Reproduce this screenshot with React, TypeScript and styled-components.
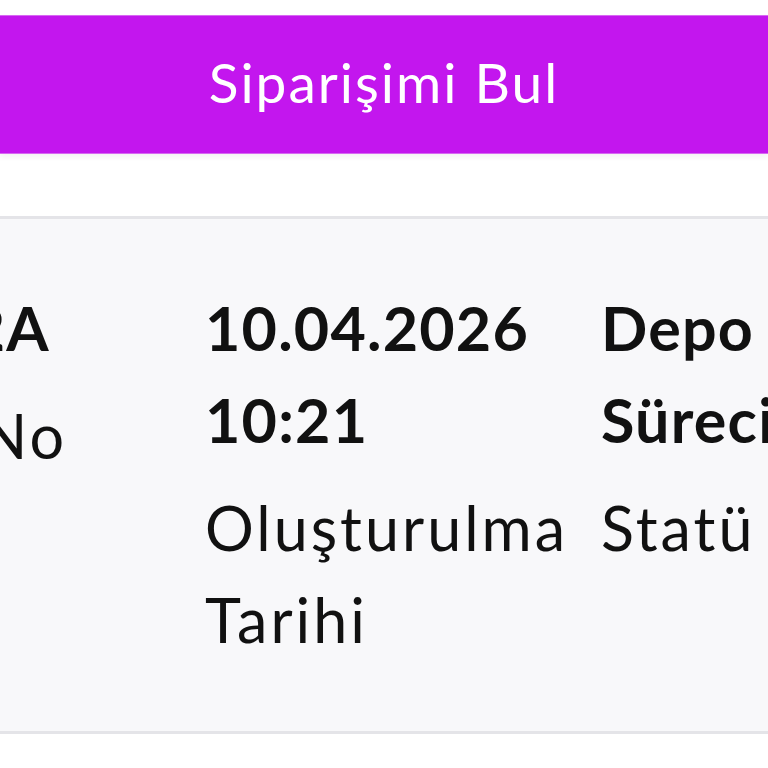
import React from "react";
import styled, { createGlobalStyle } from "styled-components";

const Global = createGlobalStyle`
  html, body { margin: 0; padding: 0; background: #ffffff; }
  body { font-family: Lato, "Noto Sans", sans-serif; color: #111111; }
  * { box-sizing: border-box; }
`;

const Page = styled.div`
  width: 768px;
  height: 768px;
  overflow: hidden;
  padding-top: 15px;
  background: #ffffff;
`;

const FindButton = styled.button`
  display: flex;
  align-items: center;
  justify-content: center;
  width: 100%;
  height: 139px;
  border: none;
  border-top: 1px solid #d768f2;
  border-bottom: 1px solid #d768f2;
  background: #c316ee;
  color: #ffffff;
  font-family: Lato, "Noto Sans", sans-serif;
  font-size: 55px;
  font-weight: 400;
  letter-spacing: 2px;
  padding: 0 0 6px;
  box-shadow: 0 3px 6px rgba(0, 0, 0, 0.05);
`;

const Card = styled.section`
  margin-top: 62px;
  height: 518px;
  border-top: 3px solid #e4e4e8;
  border-bottom: 3px solid #e4e4e8;
  background: #f8f8fa;
  overflow: hidden;
`;

const Row = styled.div`
  display: flex;
  gap: 26px;
  margin-left: -234px;
  padding-top: 63px;
`;

const Column = styled.div<{ $width: number }>`
  flex: 0 0 ${(p) => p.$width}px;
  display: flex;
  flex-direction: column;
  gap: 16px;
`;

const Value = styled.div`
  font-size: 61px;
  line-height: 92px;
  font-weight: 700;
  letter-spacing: 1.2px;
`;

const Label = styled.div`
  font-size: 61px;
  line-height: 92px;
  font-weight: 400;
  letter-spacing: 3px;
`;

const items = [
  { value: "TR.5412A", label: "Sipariş No", width: 413 },
  { value: "10.04.2026 10:21", label: "Oluşturulma Tarihi", width: 370 },
  { value: "Depo Sürecinde", label: "Statü", width: 370 },
];

export default function App() {
  return (
    <>
      <Global />
      <Page>
        <FindButton>Siparişimi Bul</FindButton>
        <Card>
          <Row>
            {items.map((it) => (
              <Column key={it.label} $width={it.width}>
                <Value>{it.value}</Value>
                <Label>{it.label}</Label>
              </Column>
            ))}
          </Row>
        </Card>
      </Page>
    </>
  );
}
